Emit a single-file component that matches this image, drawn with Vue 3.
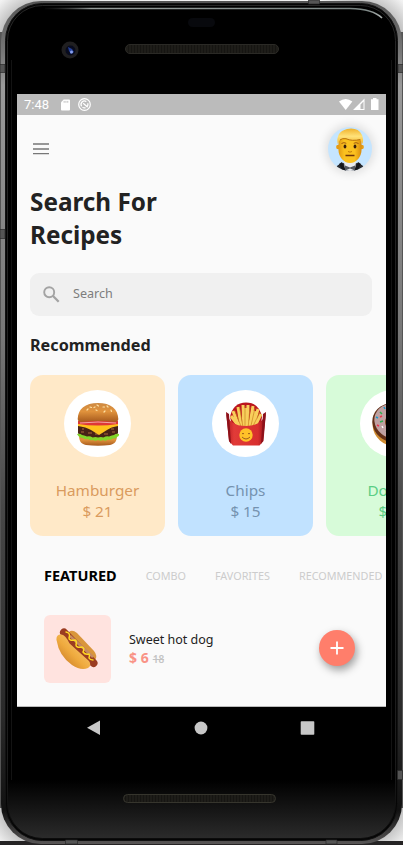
<script setup>
const cards = [
  { name: 'Hamburger', price: '$ 21', kind: 'burger' },
  { name: 'Chips', price: '$ 15', kind: 'chips' },
  { name: 'Donuts', price: '$ 15', kind: 'donut' },
]
const tabs = ['COMBO', 'FAVORITES', 'RECOMMENDED']
</script>

<template>
  <main class="phone">
    <svg class="shell" viewBox="0 0 403 845" aria-hidden="true">
      <defs>
        <linearGradient id="rim" x1="0" y1="0" x2="0" y2="1">
          <stop offset="0" stop-color="#555" />
          <stop offset=".06" stop-color="#777" />
          <stop offset=".1" stop-color="#999" />
          <stop offset=".4" stop-color="#777" />
          <stop offset=".6" stop-color="#484848" />
          <stop offset=".85" stop-color="#2a2a2a" />
          <stop offset=".96" stop-color="#111" />
          <stop offset="1" stop-color="#585656" />
        </linearGradient>
        <linearGradient id="face" x1="0" y1="0" x2="0" y2="1">
          <stop offset="0" stop-color="#000" />
          <stop offset=".93" stop-color="#000" />
          <stop offset="1" stop-color="#2b2b2b" />
        </linearGradient>
        <linearGradient id="edge" x1="0" y1="0" x2="0" y2="1">
          <stop offset="0" stop-color="#262626" />
          <stop offset=".9" stop-color="#1c1c1c" />
          <stop offset="1" stop-color="#0c0c0c" />
        </linearGradient>
        <linearGradient id="shine" gradientUnits="userSpaceOnUse" x1="40" y1="0" x2="382" y2="0">
          <stop offset="0" stop-color="#333" stop-opacity="0" />
          <stop offset=".15" stop-color="#999f9d" />
          <stop offset=".55" stop-color="#8b9492" />
          <stop offset=".95" stop-color="#7b8583" />
          <stop offset="1" stop-color="#a9b0ae" />
        </linearGradient>
        <radialGradient id="haze" cx=".5" cy=".5" r=".5">
          <stop offset="0" stop-color="#888" /><stop offset=".55" stop-color="#aaa" /><stop offset="1" stop-color="#f4f4f4" />
        </radialGradient>
        <pattern id="mesh" width="3" height="4" patternUnits="userSpaceOnUse">
          <rect width="3" height="4" fill="#161512" /><path d="M1 0v4" stroke="#26241f" />
        </pattern>
      </defs>
      <rect width="403" height="845" fill="#f1f1f1" />
      <circle cx="42" cy="44" r="60" fill="url(#haze)" />
      <circle cx="361" cy="44" r="60" fill="url(#haze)" />
      <circle cx="44" cy="800" r="62" fill="url(#haze)" />
      <circle cx="359" cy="800" r="62" fill="url(#haze)" />
      <path d="M0 32V808H6V32z" fill="#555" />
      <path d="M397 32V808H403V32z" fill="#555" />
      <rect y="841" width="403" height="4" fill="#252324" />
      <rect x="1" y="1" width="401" height="843" rx="40" fill="url(#rim)" />
      <rect x="5.500" y="3.500" width="392" height="837" rx="37" fill="#050505" stroke="#121212" />
      <rect x="7.500" y="5.500" width="388" height="833" rx="35" fill="url(#face)" stroke="url(#edge)" />
      <path d="M11.500 60V780M391.500 60V780" stroke="#131313" />
      <path d="M45 8.500H350Q373 9 382 18" fill="none" stroke="url(#shine)" stroke-width="1.700" />
      <g fill="#555" stroke="#292929" stroke-width=".7">
        <path d="M0 64.500h5v8H0zM398 64.500h5v8h-5zM0 229.500h5v9H0zM308.500 0v4h11V0zM397.500 770.500v9h5v-9zM65.500 840v4h12v-4zM326 840v4h11v-4z" />
      </g>
      <rect x="188" y="18" width="27" height="9" rx="4.500" fill="#08090d" />
      <circle cx="70" cy="50" r="8.500" fill="#201f20" />
      <circle cx="70.500" cy="50.500" r="5" fill="#080b1d" />
      <path d="M68 47l4 2 2 3-3 2-2-3z" fill="#25419a" /><circle cx="71.500" cy="52" r="1.500" fill="#8aa0ec" />
      <rect x="125.500" y="44.500" width="153" height="9" rx="4.500" fill="url(#mesh)" stroke="#2b2a26" />
      <rect x="123.500" y="794.500" width="152" height="8" rx="4" fill="url(#mesh)" stroke="#36352d" />
    </svg>

    <section class="screen">
      <header class="status">
        <span class="time">7:48</span>
        <svg class="sd" viewBox="0 0 10 12"><path d="M3 0h6q1 0 1 1v10q0 1-1 1H1q-1 0-1-1V3z" fill="#fff" /><path d="M3.500 1.500v2M5.500 1.500v2M7.500 1.500v2" stroke="#bbb" /></svg>
        <svg class="sync" viewBox="0 0 13 13" fill="none" stroke="#fff"><circle cx="6.500" cy="6.500" r="5.800" stroke-width="1.200" /><path d="M3.600 8.300A3.400 3.400 0 0 1 8.300 3.600M9.700 5.300A3.400 3.400 0 0 1 9.200 8.700L5.200 5.200M4.500 9.200q1.500 1 3 .5" stroke-width="1.300" /></svg>
        <svg class="signals" viewBox="0 0 40 13" fill="#fff">
          <path d="M0 3.600Q6.700-1.600 13.400 3.600L6.700 12z" />
          <path d="M14 12L25.500.500V12zM21.500 6.500v4.500h3V3.500z" fill-rule="evenodd" />
          <path d="M32 1.300h2V0h3.500v1.300h2V12H32z" />
        </svg>
      </header>

      <div class="topbar">
        <svg class="menu" viewBox="0 0 16 12"><path d="M0 1h16M0 6h16M0 10.600h16" stroke="#777" stroke-width="1.300" /></svg>
        <div class="avatar">
          <svg viewBox="0 0 44 44">
            <defs>
              <linearGradient id="skin"><stop offset="0" stop-color="#e39a12" /><stop offset=".25" stop-color="#fbc11f" /><stop offset=".7" stop-color="#fbc11f" /><stop offset="1" stop-color="#d98c0e" /></linearGradient>
              <linearGradient id="hair" x1="0" y1="0" x2="0" y2="1"><stop offset="0" stop-color="#f0b22c" /><stop offset=".5" stop-color="#ffe27a" /><stop offset="1" stop-color="#f3b62f" /></linearGradient>
            </defs>
            <path d="M7 44q1-7 8-8l7 2 7-2q7 1 8 8z" fill="#292b30" />
            <path d="M16 34h12l-1 10H17z" fill="#e9ebee" />
            <path d="M14 35l4 9h-3l-4-7zM30 35l-4 9h3l4-7z" fill="#15171b" />
            <path d="M17 38.500l5 2 5-2v5l-5-2-5 2z" fill="#555960" />
            <circle cx="10.300" cy="20" r="2.200" fill="#e79c14" /><circle cx="33.700" cy="20" r="2.200" fill="#e79c14" />
            <path d="M10.500 11H33.500V23c0 6.500-5 13-11.500 13S10.500 29.500 10.500 23z" fill="url(#skin)" />
            <path d="M9.700 17Q7.500 5 19 2 30 0 34 8q2 5 .3 9l-2-4.500Q24 14.500 18 11.700q-4.500-.5-6.300 1.500z" fill="url(#hair)" />
            <path d="M12 13q2-2 6-1.300 6 2.800 14.300.8" fill="none" stroke="#b8720e" stroke-width="1" />
            <path d="M13.500 16.500q2.500-1.600 4.800-.2M25.700 16.300q2.300-1.400 4.800.2" stroke="#a05c10" stroke-width="1" fill="none" />
            <ellipse cx="17" cy="19.500" rx="1.400" ry="1.900" fill="#39200d" /><ellipse cx="27" cy="19.500" rx="1.400" ry="1.900" fill="#39200d" />
            <path d="M20 24.500q2 1.300 4 0" stroke="#c07a0b" fill="none" /><path d="M17.500 28.500h9" stroke="#703509" stroke-width="1.400" fill="none" />
          </svg>
        </div>
      </div>

      <h1 class="title">Search For<br />Recipes</h1>

      <div class="search">
        <svg viewBox="0 0 17 17" fill="none" stroke="#a3a3a3"><circle cx="6.200" cy="6.200" r="5" stroke-width="1.900" /><path d="M9.800 9.800L15.700 15.700" stroke-width="2.300" /></svg>
        <span>Search</span>
      </div>

      <h2 class="heading">Recommended</h2>

      <div class="cards">
        <article v-for="c in cards" :key="c.name" class="card" :class="c.kind">
          <div class="disc">
            <svg v-if="c.kind === 'burger'" viewBox="0 0 42 44">
              <defs>
                <linearGradient id="bun" x1="0" y1="0" x2="0" y2="1"><stop offset="0" stop-color="#ce8a43" /><stop offset=".45" stop-color="#e0923c" /><stop offset="1" stop-color="#a65a1d" /></linearGradient>
              </defs>
              <path d="M2 33q19 5 38 0c0 6-2 9-7 10q-12 1.500-24 0c-5-1-7-4-7-10z" fill="url(#bun)" />
              <path d="M1 24h40v7q-2 5-20 5T1 31z" fill="#472216" />
              <path d="M4 30h3M11 31h4M18 32h3M27 32h4M35 30h3M5 27h2M34 27h3" stroke="#8b5130" stroke-width="1.500" />
              <path d="M0 32q3-1 5 1 2 0 5 1.500 3-1 5.500 1 3-1 5.500 0 3-1 5.500 0 3-2 5.500-1 3-1.500 5-1.500 2-2 5-1 .5 2-2 3-1 2-4 1.500-2 2-5 1-2 2-5 .5-2 1.500-5 0-3 1.500-5 0-3 1-5-1-3 1-5-1-4 0-6-4z" fill="#82d529" />
              <path d="M1 22q20-3 40 0v2q-7 1-11 4l-8 5-8-5q-5-3-13-4z" fill="#ffc21c" />
              <path d="M1 19q20-3 40 0v3q-20 3-40 0z" fill="#de3737" /><path d="M3 21q18-2 36 0" stroke="#f0a5a0" fill="none" />
              <path d="M.7 17C1 7 8 1 21 1S41 7 41.300 17q0 3-4 3-16-2-32.500 0-4 0-4.100-3z" fill="url(#bun)" />
              <path d="M13 5l1.500.5M20 3l1.500 1M26 5h1.500M30 4l1 1M10 8l1-1M19 8l1 .5M27 10l1-1M17 5.500l1-.5M34 8l.5 1.500" stroke="#ffe1a4" stroke-width="1.200" stroke-linecap="round" />
            </svg>
            <svg v-else-if="c.kind === 'chips'" viewBox="0 0 42 44">
              <defs><linearGradient id="box"><stop offset="0" stop-color="#b51920" /><stop offset=".2" stop-color="#e13b38" /><stop offset=".8" stop-color="#d82f2e" /><stop offset="1" stop-color="#8d101a" /></linearGradient></defs>
              <path d="M5 15Q8 .5 21 .5t16 14.500l-2 12H8z" fill="#bb151d" />
              <g stroke="#f8cf5c" stroke-width="3">
                <path d="M8 9l7 18M13 5l4 24M18 3l1 27M23 3l-1 26M28 4l-4 24M33 7l-6 22M36 12l-8 16M6 14l9 12M21 6v22M30 9l-5 19" />
              </g>
              <g stroke="#c98420" stroke-width=".7"><path d="M10 9l7 18M14.500 5l4 23M20 4v24M25 5l-2 22M30 6l-5 22M35 10l-8 16" /></g>
              <path d="M1 10q3 14 20 14t20-14l-2.500 29-4 4.500H8L4 39z" fill="url(#box)" /><path d="M1 10l3 2 2 30-2-3zM41 10l-3 2-2 30 2-3z" fill="#8c111a" />
              <circle cx="21" cy="33" r="6.700" fill="#ffc229" />
              <path d="M17 32q1-1.500 2 0M23 32q1-1.500 2 0M17 35q4 4 8 0" stroke="#91521a" fill="none" stroke-width=".9" />
            </svg>
            <svg v-else viewBox="0 0 44 44">
              <ellipse cx="22" cy="24" rx="21.500" ry="20" fill="#cf8c32" transform="rotate(20 22 24)" />
              <ellipse cx="22" cy="21" rx="22" ry="19.500" fill="#633018" transform="rotate(20 22 21)" />
              <ellipse cx="22.500" cy="19.500" rx="20.500" ry="17.500" fill="#bfa1a2" transform="rotate(20 22.500 19.500)" />
              <ellipse cx="22" cy="20" rx="9" ry="8" fill="#80461f" /><ellipse cx="23" cy="22" rx="6.500" ry="5" fill="#fff" />
              <path d="M8 10l2 2M8 20l3-1M14 29l2 1" stroke="#2fae51" stroke-width="1.500" /><path d="M12 5l1 2M4 15l2 1M18 31l1 2" stroke="#1a9ccb" stroke-width="1.500" /><path d="M8 15l2-1M5 23l2 1M14 9l2-1" stroke="#ee344e" stroke-width="1.500" /><path d="M10 24l1 2M18 5l1 1" stroke="#fff" stroke-width="1.400" />
            </svg>
          </div>
          <p class="label">{{ c.name }}<br />{{ c.price }}</p>
        </article>
      </div>

      <nav class="tabs">
        <strong>FEATURED</strong>
        <span v-for="t in tabs" :key="t">{{ t }}</span>
      </nav>

      <article class="dish">
        <div class="thumb">
          <svg viewBox="0 0 42 42">
            <defs><linearGradient id="roll" x1="1" y1="0" x2="0" y2="1"><stop offset="0" stop-color="#ffd78a" /><stop offset=".55" stop-color="#efaa3e" /><stop offset="1" stop-color="#b9681d" /></linearGradient></defs>
            <path d="M13 4q3-3 8 1l17 18q4 5 1 9l-6 1L13 12z" fill="#d9963c" />
            <path d="M8 4.500L37.500 35" stroke="#9b3c21" stroke-width="8" stroke-linecap="round" />
            <path d="M14 8l23 21" stroke="#c68a63" stroke-width="2.500" />
            <path d="M.5 12Q0 6 5.500 6.500q4 .5 8 9L33 33q3 4.500-1 7-7 3-16-3Q3 28 .5 12z" fill="url(#roll)" />
            <path d="M10 4q5 1 3 6 0 3 6 2 2 1 1 5 0 3 6 2 3 1 1 5 2 3 6 2 1 1 0 4 1 2 4 2" fill="none" stroke="#ffd923" stroke-width="1.500" stroke-linecap="round" />
          </svg>
        </div>
        <div class="info">
          <p class="name">Sweet hot dog</p>
          <p class="price">$ 6<s>18</s></p>
        </div>
        <button class="add" aria-label="Add"><svg viewBox="0 0 14 14"><path d="M7 .5v13M.5 7h13" stroke="#fff" stroke-width="1.800" /></svg></button>
      </article>
    </section>

    <footer class="nav">
      <svg viewBox="0 0 14 16"><path d="M13.500 .5v14.500L.5 7.800z" fill="#c7c7c7" /></svg>
      <svg viewBox="0 0 14 16"><circle cx="7.500" cy="8" r="6.400" fill="#c7c7c7" /></svg>
      <svg viewBox="0 0 14 16"><rect x=".2" y="1.200" width="13.600" height="13.600" rx=".8" fill="#c7c7c7" /></svg>
    </footer>
  </main>
</template>

<style>
body { margin: 0; overflow: hidden; }
</style>

<style scoped>
* { box-sizing: border-box; }
h1, h2, p { margin: 0; }
svg { display: block; flex: none; }
.phone { position: relative; width: 403px; height: 845px; padding: 94px 17px 0; overflow: hidden; font-family: "Noto Sans", sans-serif; color: #222; }
.shell { position: absolute; inset: 0; width: 403px; height: 845px; }
.screen { position: relative; height: 613px; background: #fafafa; overflow: hidden; border-bottom: 1px solid #bbb; }
.status { height: 21px; background: #bbb; display: flex; align-items: center; padding: 0 7px; color: #fff; }
.time { width: 36px; font: 13px/21px Roboto, sans-serif; }
.sd { width: 9px; height: 12px; margin-left: .5px; }
.sync { width: 13px; height: 13px; margin-left: 8.500px; }
.signals { width: 40px; height: 13px; margin-left: auto; }
.topbar { height: 68px; display: flex; justify-content: space-between; padding: 12px 14px 0 16px; }
.menu { width: 16px; height: 12px; margin-top: 16px; }
.avatar { width: 44px; height: 44px; border-radius: 50%; background: #c5e5ff; box-shadow: 0 0 9px 3px rgba(0, 0, 0, .1); }
.avatar svg { width: 44px; height: 44px; border-radius: 50%; }
.title { padding: 2px 13px 0; height: 90px; font-size: 24.300px; line-height: 33px; font-weight: 700; }
.search { height: 43px; margin: 0 14px 0 13px; border-radius: 9px; background: #f0f0f0; display: flex; align-items: center; padding-left: 13px; gap: 13px; }
.search svg { width: 17px; height: 17px; }
.search span { font-size: 12.600px; line-height: 16px; color: #7d7d7d; margin-top: -2px; }
.heading { padding: 18px 13px 0; height: 59px; font-size: 16.200px; line-height: 22px; }
.cards { display: flex; gap: 13px; padding-left: 13px; }
.card { flex: none; width: 135px; height: 161px; border-radius: 13px; padding-top: 15px; display: flex; flex-direction: column; align-items: center; }
.burger { background: #ffe9c8; color: #da9b5e; }
.chips { background: #c1e2ff; color: #7592af; }
.donut { background: #d7fbd9; color: #5bce85; }
.disc { width: 67px; height: 67px; border-radius: 50%; background: #fff; display: grid; place-items: center; }
.disc svg { width: 42px; height: 44px; }
.donut .disc svg { width: 44px; }
.label { margin-top: 23px; text-align: center; font-size: 15.300px; line-height: 21px; }
.tabs { display: flex; align-items: center; gap: 29px; height: 79px; padding: 0 0 1px 27px; white-space: nowrap; font-size: 10.800px; color: #ccc; }
.tabs strong { font-size: 14.500px; color: #000; }
.dish { display: flex; padding-left: 26.500px; }
.thumb { width: 67.500px; height: 67.500px; border-radius: 6px; background: #ffe3df; display: grid; place-items: center; }
.thumb svg { width: 42px; height: 42px; }
.info { padding: 16px 0 0 18px; }
.name { font-size: 12.500px; line-height: 18px; }
.price { font-size: 14px; line-height: 18px; font-weight: 700; color: #f99386; }
.price s { margin-left: 4px; font-size: 10px; font-weight: 600; color: #c4c4c4; }
.add { width: 36px; height: 36px; margin: 15px 31px 0 auto; padding: 0; border: 0; border-radius: 50%; background: #ff7e6b; display: grid; place-items: center; box-shadow: 2px 4px 8px rgba(0, 0, 0, .38); }
.add svg { width: 14px; height: 14px; }
.nav { position: relative; height: 42px; display: flex; justify-content: space-between; align-items: center; padding: 0 71px 0 69px; }
.nav svg { width: 15px; height: 16px; }
</style>
